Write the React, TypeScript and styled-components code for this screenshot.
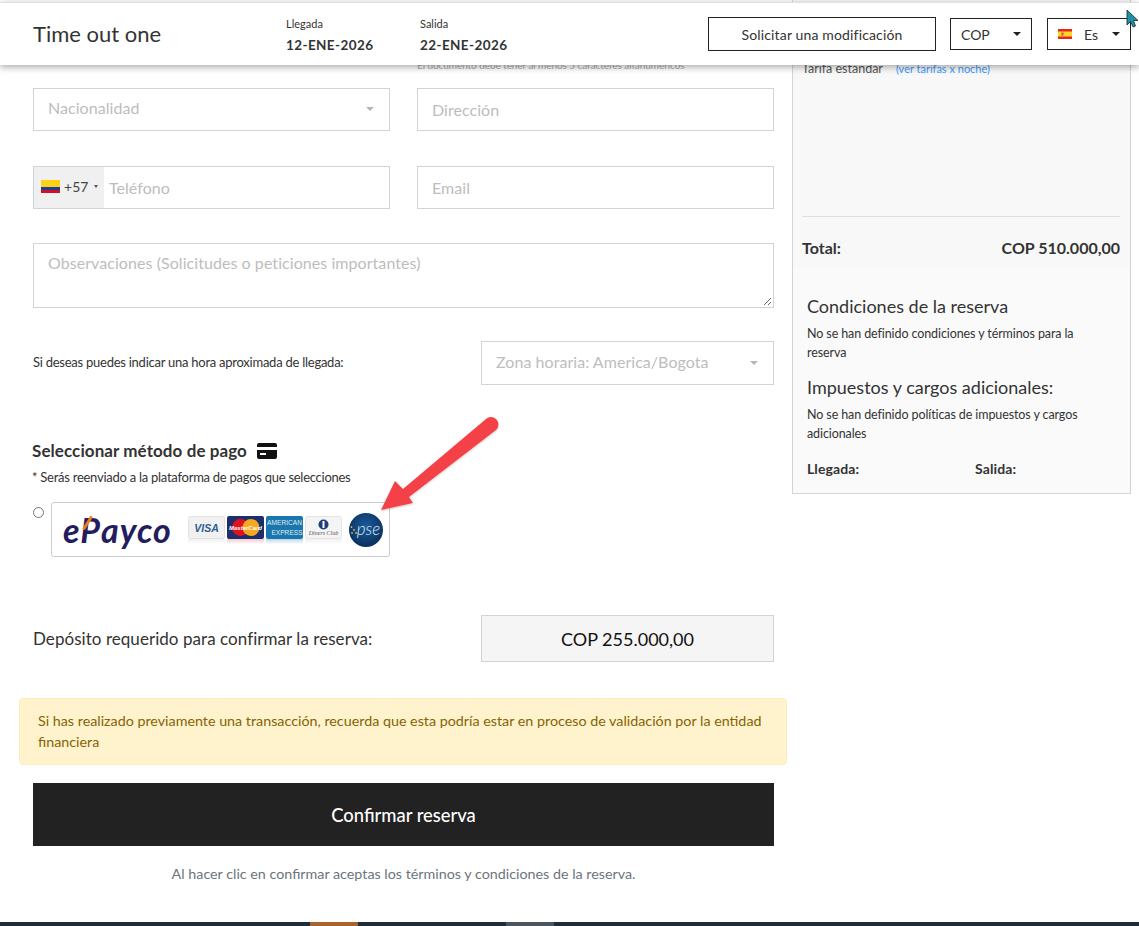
import React from 'react';
import styled, { createGlobalStyle } from 'styled-components';

const GlobalStyle = createGlobalStyle`
  html, body {
    margin: 0;
    padding: 0;
    background: #fff;
    font-family: Lato, "Open Sans", Arial, sans-serif;
    color: #333;
  }
  * {
    box-sizing: border-box;
  }
`;

const Page = styled.div`
  position: relative;
  width: 1139px;
  height: 926px;
  overflow: hidden;
  background: #fff;
`;

const TopBar = styled.header`
  position: absolute;
  top: 2px;
  left: 0;
  right: 0;
  height: 63px;
  z-index: 5;
  display: flex;
  align-items: center;
  padding: 0 8px 0 33px;
  background: #fff;
  border-top: 1px solid #e0e3e6;
  box-shadow: 0 2px 7px rgba(0, 0, 0, 0.35);
`;

const HotelName = styled.div`
  width: 253px;
  padding-bottom: 2px;
  font-size: 22px;
  color: #333;
`;

const DateBlock = styled.div`
  width: 134px;
  padding-top: 2px;
  color: #333;
`;

const DateLabel = styled.div`
  font-size: 11px;
  line-height: 14px;
  margin-bottom: 6px;
`;

const DateValue = styled.div`
  font-size: 13.5px;
  line-height: 16px;
  font-weight: 700;
  letter-spacing: 0.4px;
`;

const TopActions = styled.div`
  margin-left: auto;
  display: flex;
  align-items: center;
`;

const OutlineButton = styled.div`
  width: 228px;
  height: 34px;
  display: flex;
  align-items: center;
  justify-content: center;
  border: 1px solid #222;
  font-size: 14px;
  letter-spacing: 0.15px;
  color: #333;
`;

const TopSelect = styled.div<{ $width: number; $gap: number }>`
  width: ${(p) => p.$width}px;
  height: 32px;
  margin-left: ${(p) => p.$gap}px;
  display: flex;
  align-items: center;
  padding: 0 10px;
  border: 1px solid #222;
  font-size: 14px;
  color: #333;
`;

const LangLabel = styled.span`
  margin-left: 12px;
`;

const TopCaret = styled.span`
  margin-left: auto;
  width: 0;
  height: 0;
  border-left: 4px solid transparent;
  border-right: 4px solid transparent;
  border-top: 4px solid #222;
`;

const Columns = styled.div`
  display: grid;
  grid-template-columns: 773px 339px;
  padding-left: 19px;
  align-items: start;
`;

const MainColumn = styled.main`
  display: flex;
  flex-direction: column;
  padding-top: 60px;
  width: 768px;
`;

const FormArea = styled.div`
  padding: 0 13px 0 14px;
`;

const TwoCols = styled.div`
  display: grid;
  grid-template-columns: 357px 357px;
  column-gap: 27px;
`;

const HelpText = styled.div`
  grid-column: 2;
  height: 28px;
  font-size: 10px;
  line-height: 10px;
  letter-spacing: -0.07px;
  color: #aaa;
`;

const Field = styled.div<{ $mb?: number; $lift?: number }>`
  height: 43px;
  display: flex;
  align-items: center;
  border: 1px solid #ced4da;
  padding: 0 14px ${(p) => p.$lift ?? 0}px;
  font-size: 16px;
  letter-spacing: 0.05px;
  color: #bdbdbd;
  background: #fff;
  margin-bottom: ${(p) => p.$mb ?? 0}px;
`;

const FieldCaret = styled.span`
  margin-left: auto;
  margin-right: 1px;
  margin-top: 3px;
  width: 0;
  height: 0;
  border-left: 4px solid transparent;
  border-right: 4px solid transparent;
  border-top: 4px solid #b5b5b5;
`;

const PhoneField = styled(Field)`
  padding: 0;
`;

const DialCode = styled.div`
  width: 70px;
  height: 100%;
  display: flex;
  align-items: center;
  gap: 4px;
  padding: 0 0 2px 7px;
  margin-right: 5px;
  background: #f0f0f0;
  font-size: 14px;
  color: #444;
`;

const DialCaret = styled.span`
  width: 0;
  height: 0;
  margin-left: 1px;
  border-left: 2px solid transparent;
  border-right: 2px solid transparent;
  border-top: 3px solid #555;
`;

const TextArea = styled.div`
  position: relative;
  height: 65px;
  margin-top: 34px;
  border: 1px solid #ced4da;
  padding: 9px 14px;
  font-size: 16px;
  line-height: 20px;
  letter-spacing: 0.06px;
  color: #bdbdbd;
`;

const ResizeGrip = styled.svg`
  position: absolute;
  right: 1px;
  bottom: 1px;
`;

const ArrivalRow = styled.div`
  display: flex;
  align-items: center;
  justify-content: space-between;
  margin-top: 33px;
`;

const SmallLabel = styled.div`
  margin-top: -2px;
  font-size: 13px;
  color: #333;
  letter-spacing: -0.25px;
`;

const TimezoneSelect = styled(Field)`
  width: 293px;
  height: 44px;
`;

const PaymentTitle = styled.h3`
  display: flex;
  align-items: center;
  gap: 10px;
  margin: 55px 0 0 -1px;
  font-size: 17px;
  line-height: 22px;
  font-weight: 700;
  letter-spacing: 0.08px;
  color: #333;
`;

const PaymentHint = styled.div`
  margin: 6px 0 0 -1px;
  font-size: 13px;
  line-height: 18px;
  color: #333;
  letter-spacing: -0.26px;
`;

const PaymentOption = styled.div`
  display: flex;
  align-items: flex-start;
  margin-top: 16px;
  gap: 7px;
`;

const Radio = styled.span`
  flex: none;
  width: 11px;
  height: 11px;
  margin-top: 5px;
  border: 1px solid #767676;
  border-radius: 50%;
  background: #fff;
`;

const PaymentCard = styled.div`
  width: 339px;
  height: 55px;
  display: flex;
  align-items: center;
  padding: 0 6px 0 11px;
  border: 1px solid #ccc;
  border-radius: 3px;
`;

const EpaycoLogo = styled.span`
  width: 125px;
  font-family: Lato, "Open Sans", sans-serif;
  font-size: 34px;
  line-height: 34px;
  font-weight: 700;
  font-style: italic;
  letter-spacing: 1px;
  color: #231c5e;
`;

const EpaycoP = styled.span`
  position: relative;

  &::after {
    content: '';
    position: absolute;
    left: 6px;
    top: 6px;
    width: 3px;
    height: 16px;
    border-radius: 2px;
    background: #ee7a22;
    transform: rotate(32deg);
  }
`;

const CardRow = styled.div`
  display: flex;
  align-items: center;
  gap: 2px;
`;

const DepositRow = styled.div`
  display: flex;
  align-items: center;
  justify-content: space-between;
  margin-top: 58px;
`;

const DepositLabel = styled.div`
  font-size: 17px;
  letter-spacing: 0.05px;
  color: #333;
`;

const DepositBox = styled.div`
  width: 293px;
  height: 47px;
  display: flex;
  align-items: center;
  justify-content: center;
  background: #f5f5f5;
  border: 1px solid #ced4da;
  font-size: 18px;
  color: #111;
`;

const Notice = styled.div`
  margin-top: 36px;
  height: 67px;
  padding: 11px 18px;
  background: #fff3cd;
  border: 1px solid #ffeeba;
  border-radius: 4px;
  font-size: 14.3px;
  line-height: 21px;
  color: #856404;
`;

const ConfirmButton = styled.div`
  height: 63px;
  margin: 18px 13px 0 14px;
  display: flex;
  align-items: center;
  justify-content: center;
  background: #222;
  color: #fff;
  font-size: 18.4px;
  font-weight: 500;
`;

const TermsNote = styled.div`
  margin: 19px 13px 0 14px;
  text-align: center;
  font-size: 14.3px;
  line-height: 18px;
  color: #6c757d;
`;

const Sidebar = styled.aside`
  height: 494px;
  display: flex;
  flex-direction: column;
  padding: 60px 10px 0 9px;
  background: #f8f8f8;
  border: 1px solid #d4d4d4;
  border-top: 0;
`;

const RateLine = styled.div`
  display: flex;
  gap: 13px;
  font-size: 12.5px;
  line-height: 18px;
  color: #555;
  height: 157px;
  border-bottom: 1px solid #dfdfdf;
`;

const RateLink = styled.span`
  font-size: 11px;
  color: #3d9bff;
`;

const TotalLine = styled.div`
  display: flex;
  justify-content: space-between;
  margin-top: 21px;
  font-size: 16px;
  line-height: 20px;
  font-weight: 700;
  color: #333;
`;

const Terms = styled.div`
  flex: 1;
  margin: 9px -10px 0 -9px;
  padding: 27px 30px 0 14px;
  background: #fafafa;
`;

const TermsTitle = styled.h4`
  margin: 0;
  font-size: 18px;
  line-height: 24px;
  font-weight: 400;
  color: #333;
`;

const TermsBody = styled.p`
  margin: 6px 0 13px;
  font-size: 12.5px;
  line-height: 19px;
  color: #333;
  letter-spacing: -0.1px;
`;

const CheckTimes = styled.div`
  display: grid;
  grid-template-columns: 168px 1fr;
  margin-top: 17px;
  font-size: 14px;
  line-height: 18px;
  font-weight: 700;
  letter-spacing: 0.1px;
`;

const BottomBar = styled.footer`
  position: absolute;
  left: 0;
  right: 0;
  bottom: 0;
  height: 4px;
  background: #1e2d38;
`;

const BottomTab = styled.span<{ $x: number; $color: string }>`
  position: absolute;
  top: 0;
  left: ${(p) => p.$x}px;
  width: 48px;
  height: 4px;
  background: ${(p) => p.$color};
`;

const ArrowOverlay = styled.svg`
  position: absolute;
  left: 375px;
  top: 410px;
  z-index: 3;
`;

const CursorOverlay = styled.svg`
  position: absolute;
  left: 1126px;
  top: 9px;
  z-index: 6;
`;

const PseCircle = styled.svg`
  margin-left: 5px;
`;

const FlagIcon = styled.svg`
  flex: none;
`;

const ColombiaFlag = () => (
  <FlagIcon width="19" height="13" viewBox="0 0 19 13">
    <rect width="19" height="7" fill="#fcd116" />
    <rect y="7" width="19" height="3" fill="#1a3f94" />
    <rect y="10" width="19" height="3" fill="#ce1126" />
  </FlagIcon>
);

const SpainFlag = () => (
  <FlagIcon width="14" height="10" viewBox="0 0 14 10">
    <rect width="14" height="10" fill="#e8261c" />
    <rect y="2.5" width="14" height="5" fill="#fbd52b" />
    <rect x="3.5" y="3.5" width="2" height="3" fill="#c9553c" />
  </FlagIcon>
);

const CreditCardIcon = () => (
  <svg width="20" height="16" viewBox="0 0 20 16">
    <path d="M2 0h16a2 2 0 0 1 2 2v2H0V2a2 2 0 0 1 2-2zM0 7h20v7a2 2 0 0 1-2 2H2a2 2 0 0 1-2-2zM3 10v2h6v-2z" fill="#111" fillRule="evenodd" />
  </svg>
);

const CardFade = ({ id, color }: { id: string; color: string }) => (
  <>
    <defs>
      <linearGradient id={id} x1="0" y1="0" x2="0" y2="1">
        <stop offset="0%" stopColor={color} stopOpacity="0.3" />
        <stop offset="100%" stopColor={color} stopOpacity="0" />
      </linearGradient>
    </defs>
    <rect y="23" width="37" height="5" fill={`url(#${id})`} />
  </>
);

const VisaCard = () => (
  <svg width="37" height="28" viewBox="0 0 37 28">
    <CardFade id="fadeVisa" color="#cfcfcf" />
    <rect x="0.5" y="0.5" width="36" height="22" rx="2" fill="#f1f1f1" stroke="#e2e2e2" />
    <text x="18.5" y="15.5" textAnchor="middle" fontFamily="Liberation Sans" fontStyle="italic" fontWeight="700" fontSize="10.5" fill="#2a5f8f">VISA</text>
  </svg>
);

const MasterCard = () => (
  <svg width="37" height="28" viewBox="0 0 37 28">
    <CardFade id="fadeMaster" color="#e0485a" />
    <rect width="37" height="23" rx="2" fill="#1c2f6c" />
    <circle cx="13.5" cy="11.5" r="8.5" fill="#e3101d" />
    <circle cx="24" cy="11.5" r="8.5" fill="#f6a821" />
    <text x="18.5" y="14" textAnchor="middle" fontFamily="Liberation Sans" fontStyle="italic" fontWeight="700" fontSize="6" fill="#fff">MasterCard</text>
  </svg>
);

const AmexCard = () => (
  <svg width="37" height="28" viewBox="0 0 37 28">
    <CardFade id="fadeAmex" color="#1b76ab" />
    <rect width="37" height="23" rx="2" fill="#1b76ab" />
    <text x="18.5" y="9" textAnchor="middle" fontFamily="Liberation Sans" fontSize="6.6" fill="#dfeef7">AMERICAN</text>
    <text x="21" y="18.5" textAnchor="middle" fontFamily="Liberation Sans" fontSize="6.6" fill="#dfeef7">EXPRESS</text>
  </svg>
);

const DinersCard = () => (
  <svg width="37" height="28" viewBox="0 0 37 28">
    <CardFade id="fadeDiners" color="#cfcfcf" />
    <rect x="0.5" y="0.5" width="36" height="22" rx="2" fill="#f4f4f4" stroke="#e4e4e4" />
    <circle cx="18.5" cy="8.5" r="5" fill="#1d3f7c" />
    <rect x="17.5" y="5" width="2" height="7" fill="#fff" />
    <text x="18.5" y="19" textAnchor="middle" fontFamily="Liberation Serif" fontStyle="italic" fontSize="6" fill="#555">Diners Club</text>
  </svg>
);

const PseBadge = () => (
  <PseCircle width="34" height="34" viewBox="0 0 34 34">
    <defs>
      <radialGradient id="pseFill" cx="50%" cy="40%" r="60%">
        <stop offset="0%" stopColor="#1c5c9c" />
        <stop offset="100%" stopColor="#0a2f5e" />
      </radialGradient>
    </defs>
    <circle cx="17" cy="17" r="17" fill="url(#pseFill)" />
    <circle cx="2.5" cy="14" r="0.9" fill="#e0b93a" />
    <circle cx="5" cy="17" r="0.9" fill="#e0b93a" />
    <circle cx="3" cy="20" r="0.9" fill="#e0b93a" />
    <circle cx="7" cy="20" r="0.9" fill="#e0b93a" />
    <text x="19.5" y="22" textAnchor="middle" fontFamily="Lato" fontStyle="italic" fontWeight="300" fontSize="17" fill="#dcebf7">pse</text>
  </PseCircle>
);

const App: React.FC = () => {
  return (
    <Page>
      <GlobalStyle />
      <TopBar>
        <HotelName>Time out one</HotelName>
        <DateBlock>
          <DateLabel>Llegada</DateLabel>
          <DateValue>12-ENE-2026</DateValue>
        </DateBlock>
        <DateBlock>
          <DateLabel>Salida</DateLabel>
          <DateValue>22-ENE-2026</DateValue>
        </DateBlock>
        <TopActions>
          <OutlineButton>Solicitar una modificación</OutlineButton>
          <TopSelect $width={82} $gap={14}>
            COP
            <TopCaret />
          </TopSelect>
          <TopSelect $width={84} $gap={15}>
            <SpainFlag />
            <LangLabel>Es</LangLabel>
            <TopCaret />
          </TopSelect>
        </TopActions>
      </TopBar>

      <Columns>
        <MainColumn>
          <FormArea>
            <TwoCols>
              <HelpText>El documento debe tener al menos 5 caracteres alfanuméricos</HelpText>
            </TwoCols>
            <TwoCols>
              <Field $mb={35} $lift={4}>
                Nacionalidad
                <FieldCaret />
              </Field>
              <Field $mb={35}>Dirección</Field>
              <PhoneField>
                <DialCode>
                  <ColombiaFlag />
                  +57
                  <DialCaret />
                </DialCode>
                Teléfono
              </PhoneField>
              <Field>Email</Field>
            </TwoCols>
            <TextArea>
              Observaciones (Solicitudes o peticiones importantes)
              <ResizeGrip width="10" height="10" viewBox="0 0 10 10">
                <path d="M9 2 2 9M9 6 6 9" stroke="#666" strokeWidth="1" fill="none" />
              </ResizeGrip>
            </TextArea>
            <ArrivalRow>
              <SmallLabel>Si deseas puedes indicar una hora aproximada de llegada:</SmallLabel>
              <TimezoneSelect $lift={4}>
                Zona horaria: America/Bogota
                <FieldCaret />
              </TimezoneSelect>
            </ArrivalRow>
            <PaymentTitle>
              Seleccionar método de pago
              <CreditCardIcon />
            </PaymentTitle>
            <PaymentHint>* Serás reenviado a la plataforma de pagos que selecciones</PaymentHint>
            <PaymentOption>
              <Radio />
              <PaymentCard>
                <EpaycoLogo>
                  e<EpaycoP>P</EpaycoP>ayco
                </EpaycoLogo>
                <CardRow>
                  <VisaCard />
                  <MasterCard />
                  <AmexCard />
                  <DinersCard />
                  <PseBadge />
                </CardRow>
              </PaymentCard>
            </PaymentOption>
            <DepositRow>
              <DepositLabel>Depósito requerido para confirmar la reserva:</DepositLabel>
              <DepositBox>COP 255.000,00</DepositBox>
            </DepositRow>
          </FormArea>
          <Notice>
            Si has realizado previamente una transacción, recuerda que esta podría estar en proceso de validación por la entidad financiera
          </Notice>
          <ConfirmButton>Confirmar reserva</ConfirmButton>
          <TermsNote>Al hacer clic en confirmar aceptas los términos y condiciones de la reserva.</TermsNote>
        </MainColumn>

        <Sidebar>
          <RateLine>
            Tarifa estándar
            <RateLink>(ver tarifas x noche)</RateLink>
          </RateLine>
          <TotalLine>
            <span>Total:</span>
            <span>COP 510.000,00</span>
          </TotalLine>
          <Terms>
            <TermsTitle>Condiciones de la reserva</TermsTitle>
            <TermsBody>No se han definido condiciones y términos para la reserva</TermsBody>
            <TermsTitle>Impuestos y cargos adicionales:</TermsTitle>
            <TermsBody>No se han definido políticas de impuestos y cargos adicionales</TermsBody>
            <CheckTimes>
              <span>Llegada:</span>
              <span>Salida:</span>
            </CheckTimes>
          </Terms>
        </Sidebar>
      </Columns>

      <ArrowOverlay width="130" height="110" viewBox="0 0 130 110">
        <defs>
          <filter id="arrowShadow" x="-20%" y="-20%" width="140%" height="140%">
            <feDropShadow dx="0" dy="1" stdDeviation="1.2" floodColor="#000" floodOpacity="0.22" />
          </filter>
        </defs>
        <path
          d="M6 100 L20 71 L28 79 L111 9 A7 7 0 0 1 121 20 L34 87 L38 93 Z"
          fill="#f44146"
          filter="url(#arrowShadow)"
        />
      </ArrowOverlay>

      <CursorOverlay width="13" height="19" viewBox="0 0 13 19">
        <path d="M1 1 L1 16 L4.5 12.5 L7 18 L9.5 17 L7.5 11.5 L12 11.5 Z" fill="#1f8fa3" stroke="#0d2a33" strokeWidth="0.8" />
      </CursorOverlay>

      <BottomBar>
        <BottomTab $x={310} $color="#a8622c" />
        <BottomTab $x={506} $color="#4a555d" />
      </BottomBar>
    </Page>
  );
};

export default App;
